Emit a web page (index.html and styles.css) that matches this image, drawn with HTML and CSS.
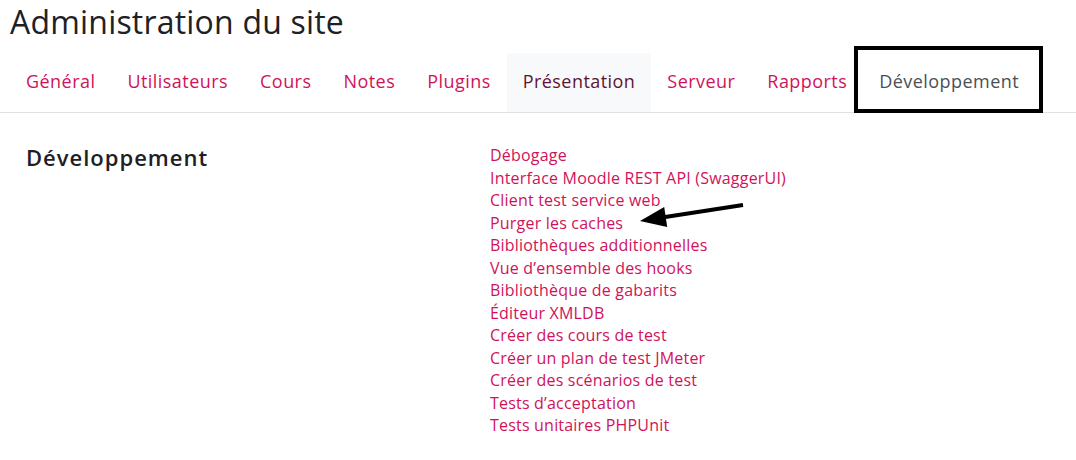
FILE: index.html
```html
<!DOCTYPE html>
<html lang="fr">
<head>
<meta charset="utf-8">
<title>Administration du site</title>
<link rel="stylesheet" href="styles.css">
</head>
<body>
<header class="page-header">
  <h1 class="page-title">Administration du site</h1>
</header>
<nav class="tabs">
  <a class="tab" href="#">Général</a>
  <a class="tab" href="#">Utilisateurs</a>
  <a class="tab" href="#">Cours</a>
  <a class="tab" href="#">Notes</a>
  <a class="tab" href="#">Plugins</a>
  <a class="tab tab-active" href="#">Présentation</a>
  <a class="tab" href="#">Serveur</a>
  <a class="tab" href="#">Rapports</a>
  <a class="tab tab-current" href="#">Développement<span class="highlight"></span></a>
</nav>
<main class="section">
  <h2 class="section-title">Développement</h2>
  <ul class="links">
    <li><a href="#">Débogage</a></li>
    <li><a href="#">Interface Moodle REST API (SwaggerUI)</a></li>
    <li><a href="#">Client test service web</a></li>
    <li class="arrow-row"><a href="#">Purger les caches</a>
      <svg class="arrow" width="112" height="32" viewBox="0 0 112 32"><path d="M107 7 L26 19.5" stroke="#000" stroke-width="4" fill="none"/><path d="M4 23 L28.2 9.1 L31.2 28.9 Z" fill="#000"/></svg>
    </li>
    <li><a href="#">Bibliothèques additionnelles</a></li>
    <li><a href="#">Vue d’ensemble des hooks</a></li>
    <li><a href="#">Bibliothèque de gabarits</a></li>
    <li><a href="#">Éditeur XMLDB</a></li>
    <li><a href="#">Créer des cours de test</a></li>
    <li><a href="#">Créer un plan de test JMeter</a></li>
    <li><a href="#">Créer des scénarios de test</a></li>
    <li><a href="#">Tests d’acceptation</a></li>
    <li><a href="#">Tests unitaires PHPUnit</a></li>
  </ul>
</main>
</body>
</html>
```
FILE: styles.css
```css
html, body {
  margin: 0;
  padding: 0;
  background: #fff;
  font-family: "Open Sans", "DejaVu Sans", sans-serif;
  color: #1d2125;
}
a { text-decoration: none; }
.page-header {
  padding: 0 10px;
  height: 46px;
}
.page-title {
  margin: 0;
  font-size: 32px;
  font-weight: 500;
  letter-spacing: 0.2px;
  line-height: 44px;
}
.tabs {
  display: flex;
  padding: 7px 0 0 10px;
  border-bottom: 1px solid #dee2e6;
  height: 59px;
}
.tab {
  position: relative;
  display: flex;
  align-items: center;
  padding: 0 16px 4px;
  font-size: 18px;
  letter-spacing: 0.45px;
  color: #d0125a;
}
.tab-active {
  background: #f8f9fa;
  color: #5e1433;
}
.tab-current {
  color: #495057;
}
.highlight {
  position: absolute;
  left: -9px;
  right: -8px;
  top: -7px;
  bottom: -1px;
  border: 4px solid #000;
}
.section {
  display: grid;
  grid-template-columns: 464px 1fr;
  padding: 31px 0 0 26px;
}
.section-title {
  margin: 0;
  font-size: 22px;
  font-weight: 600;
  letter-spacing: 1px;
  line-height: 26px;
}
.links {
  list-style: none;
  margin: 0;
  padding: 0;
}
.links li {
  font-size: 16px;
  line-height: 22.5px;
  letter-spacing: 0.2px;
}
.links a { color: #d0125a; }
.arrow-row { position: relative; }
.arrow {
  position: absolute;
  left: 146px;
  top: -14px;
}
```
